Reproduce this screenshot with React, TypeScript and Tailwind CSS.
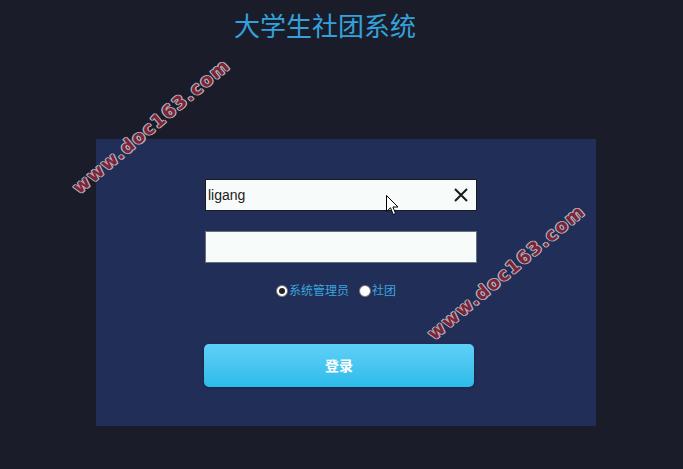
import React from "react";

function Watermark({ className }: { className: string }) {
  return (
    <div
      className={`pointer-events-none absolute -translate-x-1/2 -translate-y-1/2 -rotate-[40deg] whitespace-nowrap font-['DejaVu_Sans',sans-serif] text-[18px] font-bold tracking-[1.5px] text-[#7f2336] [text-shadow:1px_0_#b0b0bc,-1px_0_#b0b0bc,0_1px_#b0b0bc,0_-1px_#b0b0bc,1px_1px_#b0b0bc,-1px_-1px_#b0b0bc] ${className}`}
    >
      www.doc163.com
    </div>
  );
}

function Radio({ checked, label }: { checked?: boolean; label: string }) {
  return (
    <label className="flex items-center">
      <span className="flex h-[12px] w-[12px] items-center justify-center rounded-full border border-[#777] bg-white">
        {checked && <span className="h-[6px] w-[6px] rounded-full bg-[#222]" />}
      </span>
      <span className="ml-[1px] text-[12px] leading-none text-[#3aa6de]">{label}</span>
    </label>
  );
}

export default function App() {
  return (
    <div className="relative min-h-[469px] w-full overflow-hidden bg-[#1a1d29] font-['Liberation_Sans','Noto_Sans_CJK_SC',sans-serif]">
      <div className="flex justify-center pr-[33px] pt-[8px]">
        <h1 className="font-['Noto_Sans_CJK_SC',sans-serif] text-[26px] leading-[34px] text-[#33a2dc]">
          大学生社团系统
        </h1>
      </div>

      <div className="ml-[96px] mt-[97px] h-[287px] w-[500px] bg-[#212f58] pt-[40px]">
        <div className="ml-[109px] flex w-[272px] flex-col">
          <div className="flex h-[32px] items-center border border-[#1b1b1b] bg-[#f7fbf9] pl-[2px] pr-[7px]">
            <span className="flex-1 text-[14px] text-[#222]">ligang</span>
            <svg width="16" height="16" viewBox="0 0 16 16" className="text-[#1a1a1a]">
              <path d="M2 2 L14 14 M14 2 L2 14" stroke="currentColor" strokeWidth="2" />
            </svg>
          </div>

          <div className="mt-[20px] h-[32px] border border-[#6b7080] bg-[#f7fbf9]" />

          <div className="mt-[22px] flex items-center justify-center gap-[10px] pr-[10px]">
            <Radio checked label="系统管理员" />
            <Radio label="社团" />
          </div>

          <button className="mt-[47px] -ml-[1px] flex h-[43px] w-[270px] items-center justify-center rounded-[5px] bg-gradient-to-b from-[#5ed0f8] to-[#2bbbe9] text-[14px] font-bold text-white shadow-[0_1px_3px_rgba(0,0,0,0.3)] font-['Noto_Sans_CJK_SC',sans-serif]">
            登录
          </button>
        </div>
      </div>

      <svg
        className="pointer-events-none absolute left-[386px] top-[195px]"
        width="13"
        height="21"
        viewBox="0 0 13 21"
      >
        <path
          d="M0.5 0.5 L0.5 16.5 L4.5 12.8 L7.2 19.5 L9.6 18.5 L6.9 12 L12 12 Z"
          fill="white"
          stroke="black"
          strokeWidth="1"
        />
      </svg>

      <Watermark className="left-[151px] top-[126px]" />
      <Watermark className="left-[506px] top-[272px]" />
    </div>
  );
}
